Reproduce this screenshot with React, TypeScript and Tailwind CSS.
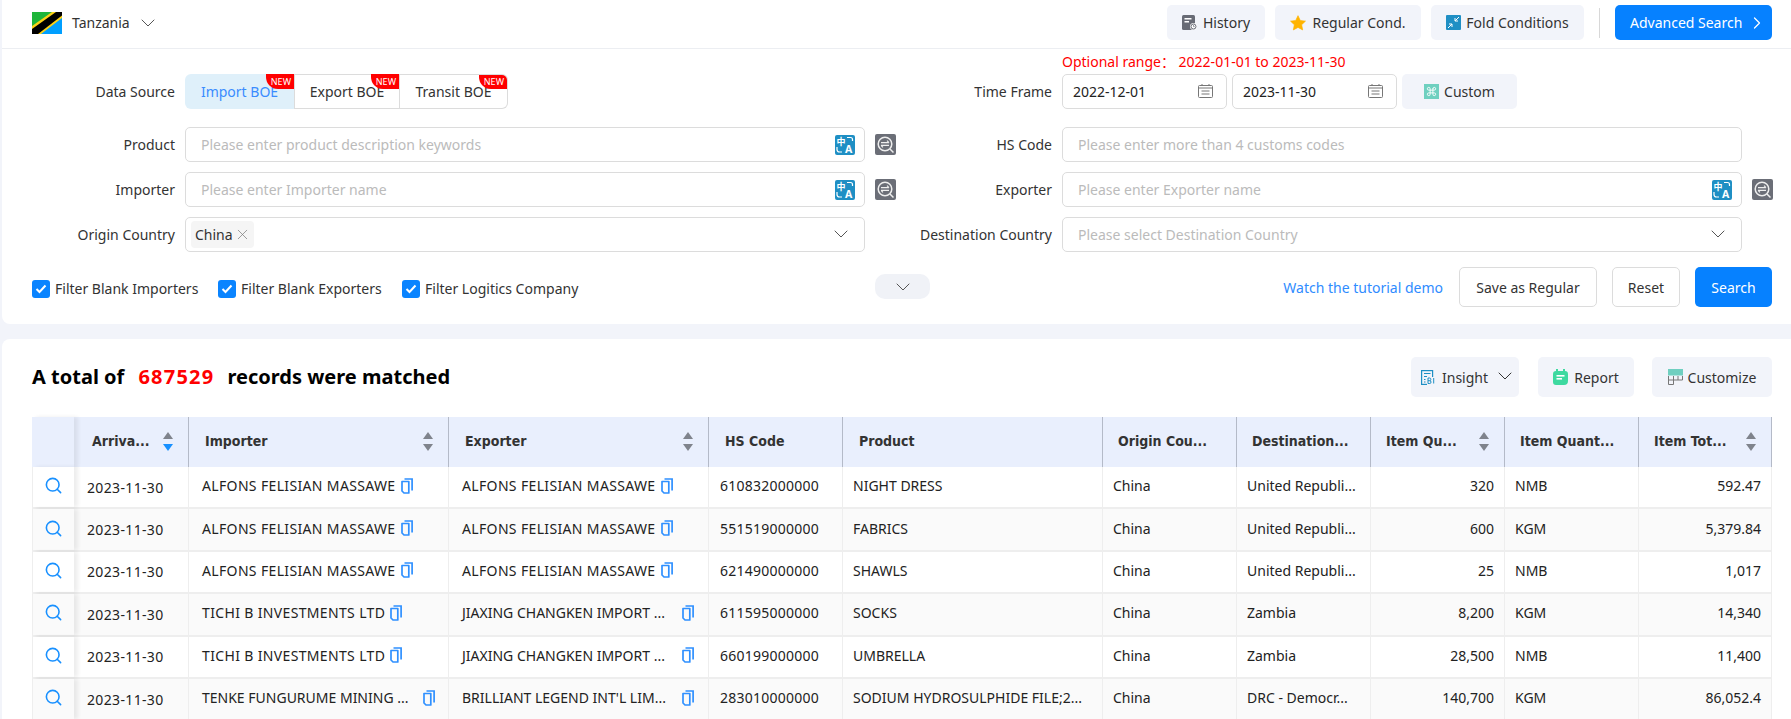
import { ChevronDown, ChevronRight, Command, Search, X } from 'lucide-react';
import type { ReactNode } from 'react';

const rows = [
  { importer: 'ALFONS FELISIAN MASSAWE', exporter: 'ALFONS FELISIAN MASSAWE', hs: '610832000000', product: 'NIGHT DRESS', dest: 'United Republi...', qty: '320', unit: 'NMB', total: '592.47' },
  { importer: 'ALFONS FELISIAN MASSAWE', exporter: 'ALFONS FELISIAN MASSAWE', hs: '551519000000', product: 'FABRICS', dest: 'United Republi...', qty: '600', unit: 'KGM', total: '5,379.84' },
  { importer: 'ALFONS FELISIAN MASSAWE', exporter: 'ALFONS FELISIAN MASSAWE', hs: '621490000000', product: 'SHAWLS', dest: 'United Republi...', qty: '25', unit: 'NMB', total: '1,017' },
  { importer: 'TICHI B INVESTMENTS LTD', exporter: 'JIAXING CHANGKEN IMPORT ...', long: true, hs: '611595000000', product: 'SOCKS', dest: 'Zambia', qty: '8,200', unit: 'KGM', total: '14,340' },
  { importer: 'TICHI B INVESTMENTS LTD', exporter: 'JIAXING CHANGKEN IMPORT ...', long: true, hs: '660199000000', product: 'UMBRELLA', dest: 'Zambia', qty: '28,500', unit: 'NMB', total: '11,400' },
  { importer: 'TENKE FUNGURUME MINING ...', importerLong: true, exporter: "BRILLIANT LEGEND INT'L LIM...", long: true, hs: '283010000000', product: 'SODIUM HYDROSULPHIDE FILE;2...', dest: 'DRC - Democr...', qty: '140,700', unit: 'KGM', total: '86,052.4' },
];

const Flag = () => (
  <svg width="30" height="22" viewBox="0 0 30 22" className="shrink-0 -mt-[2px]">
    <rect width="30" height="22" fill="#1eb53a" />
    <polygon points="30,0 30,22 0,22" fill="#009fff" />
    <polygon points="0,22 0,14 20,0 30,0 30,6 9,22" fill="#fcd116" />
    <polygon points="0,22 0,17 24,0 30,0 30,3.5 6,22" fill="#000" />
  </svg>
);

const HistoryIcon = () => (
  <svg width="15" height="15" viewBox="0 0 15 15" className="shrink-0">
    <rect width="13" height="15" rx="1.5" fill="#686b75" />
    <rect x="2.5" y="3" width="7" height="1.5" fill="#fff" />
    <rect x="2.5" y="6" width="4.5" height="1.5" fill="#fff" />
    <circle cx="11.5" cy="11.5" r="3.5" fill="#fff" />
    <circle cx="11.5" cy="11.5" r="2.5" fill="none" stroke="#686b75" />
    <path d="M11.5 10v1.6h1.2" stroke="#686b75" strokeWidth="0.7" fill="none" />
  </svg>
);

const StarIcon = () => (
  <svg width="16" height="16" viewBox="0 0 24 24" className="shrink-0">
    <path d="M12 1l3.4 7.2 7.8 1-5.7 5.4 1.5 7.8L12 18.6l-7 3.8 1.5-7.8L.8 9.2l7.8-1z" fill="#ffb400" stroke="#ffb400" strokeLinejoin="round" />
  </svg>
);

const FoldIcon = () => (
  <svg width="15" height="15" viewBox="0 0 15 15" className="shrink-0">
    <rect width="15" height="15" rx="1" fill="#1f8fc4" />
    <path d="M13 2 9 6M9 3v3h3M2 13l4-4M3 9h3v3" stroke="#fff" strokeWidth="1" fill="none" />
  </svg>
);

const CalendarIcon = () => (
  <svg width="15" height="14" viewBox="0 0 15 14" fill="none" stroke="#777" strokeWidth="1" className="shrink-0 -mt-[2px]">
    <rect x="0.5" y="1.5" width="14" height="12" rx="1" />
    <path d="M0.5 4h14M4 0v2M11 0v2M3.5 7h8M3.5 10h8" />
  </svg>
);

const TranslateIcon = () => (
  <svg width="20" height="20" viewBox="0 0 20 20" className="shrink-0">
    <rect width="20" height="20" rx="2" fill="#1f8fc4" />
    <text x="1.5" y="9.5" fontSize="9" fontWeight="700" fill="#fff" fontFamily="'Noto Sans CJK SC', sans-serif">中</text>
    <text x="10" y="18" fontSize="10.5" fontWeight="700" fill="#fff" fontFamily="'Noto Sans', sans-serif">A</text>
    <path d="M12 2.5h3.5q2 0 2 2v1.5M2 12v2.5q0 2.5 2.5 2.5H7" stroke="#fff" strokeWidth="1.2" fill="none" />
  </svg>
);

const CompareIcon = () => (
  <svg width="21" height="21" viewBox="0 0 21 21" className="shrink-0">
    <rect width="21" height="21" rx="2" fill="#6b6e77" />
    <circle cx="10" cy="10" r="6.8" fill="none" stroke="#eee" strokeWidth="1.5" />
    <path d="M15 15l3.5 3.5" stroke="#eee" strokeWidth="1.5" />
    <path d="M6 8.6h8M14 8.6l-2-2M14 11.4H6M6 11.4l2 2" stroke="#eee" strokeWidth="1.1" fill="none" />
  </svg>
);

const InsightIcon = () => (
  <svg width="15" height="15" viewBox="0 0 15 15" fill="none" className="shrink-0">
    <rect x="0.6" y="0.6" width="11" height="13.8" stroke="#1f8fc4" strokeWidth="1.2" />
    <path d="M3 3.5h6.5M3 6.5h3M3 9.5h1.5M3 12h1.5" stroke="#1f8fc4" strokeWidth="1.1" />
    <rect x="6" y="7" width="9" height="8" fill="#f2f4fa" />
    <path d="M7 8v5.5h1.8q1.2 0 1.2-1.4t-1.2-1.4H7M8.8 10.7q1 0 1-1.3T8.8 8H7M12.7 8v5.5" stroke="#1f8fc4" strokeWidth="1" />
  </svg>
);

const ReportIcon = () => (
  <svg width="15" height="16" viewBox="0 0 15 16" className="shrink-0">
    <path d="M3 0h2v2h5V0h2v2q3 0 3 3v7q0 4-4 4H3q-3 0-3-3V5q0-3 3-3z" fill="#3ed9a0" />
    <rect x="3.5" y="6" width="8" height="1.6" fill="#fff" />
    <rect x="3.5" y="9" width="5.5" height="1.6" fill="#fff" />
  </svg>
);

const CustomizeIcon = () => (
  <svg width="15" height="16" viewBox="0 0 15 16" fill="none" className="shrink-0">
    <rect width="15" height="6.5" fill="#6fcfc0" />
    <path d="M.5 7v8.5h5V7M.5 11h14M5.5 7v4M10 7v4M14.5 7v4" stroke="#777" strokeWidth="1" />
  </svg>
);

const CopyIcon = () => (
  <svg width="12" height="16" viewBox="0 0 12 16" fill="none" stroke="#2f90ff" strokeWidth="1.7" className="shrink-0">
    <path d="M3.5 1h7.6v11.5" />
    <path d="M1 3.5h6.8V15H3l-2-2z" strokeLinejoin="round" />
  </svg>
);

const SortIcon = ({ active }: { active?: boolean }) => (
  <svg width="10" height="19" viewBox="0 0 10 19" className="shrink-0">
    <polygon points="5,0 10,7 0,7" fill="#7f838c" />
    <polygon points="5,19 10,12 0,12" fill={active ? '#1890ff' : '#7f838c'} />
  </svg>
);

const Checkbox = ({ label, className }: { label: string; className: string }) => (
  <div className={`flex items-center gap-[5px] ${className}`}>
    <span className="w-[18px] h-[18px] rounded-[3px] bg-[#0a84ff] flex items-center justify-center">
      <svg width="12" height="10" viewBox="0 0 12 10" fill="none" stroke="#fff" strokeWidth="2">
        <path d="M1.5 5l3 3 6-6.5" />
      </svg>
    </span>
    <span>{label}</span>
  </div>
);

const Segment = ({ label, className }: { label: string; className: string }) => (
  <div className={`relative h-full flex items-center justify-center border-y border-r border-[#dcdcdc] ${className}`}>
    {label}
    <span className="absolute -top-px right-0 w-[28px] h-[15px] bg-[#ff0000] rounded-bl-[12px] text-white text-[9px] leading-[15px] text-right pr-[3px]">
      NEW
    </span>
  </div>
);

const Label = ({ children, className }: { children: ReactNode; className: string }) => (
  <div className={`shrink-0 text-right mr-[10px] ${className}`}>{children}</div>
);

const TextField = ({ placeholder, translate }: { placeholder: string; translate?: boolean }) => (
  <div className="w-[680px] h-[35px] shrink-0 border border-[#dcdcdc] rounded-[5px] flex items-center justify-between pl-[15px] pr-[9px] text-[#bbb]">
    <span>{placeholder}</span>
    {translate && <TranslateIcon />}
  </div>
);

const SoftButton = ({ children, className }: { children: ReactNode; className: string }) => (
  <div className={`flex items-center justify-center rounded-[5px] bg-[#f2f4fa] ${className}`}>{children}</div>
);

const HeadCell = ({ title, sort, active, pad }: { title: string; sort?: boolean; active?: boolean; pad: string }) => (
  <div className={`flex items-center justify-between pr-[15px] pb-[2px] border-r border-[#b4bac8] font-bold text-[#333] font-['DejaVu_Sans_Condensed','DejaVu_Sans',sans-serif] text-[14px] ${pad}`}>
    <span>{title}</span>
    {sort && <SortIcon active={active} />}
  </div>
);

const cell = 'flex items-center border-r border-[#eee] whitespace-nowrap overflow-hidden pb-[3px]';

const App = () => {
  return (
    <div className="h-[719px] overflow-hidden bg-[#f2f4fa] pl-[2px] text-[14px] text-[#333] font-['Noto_Sans','Noto_Sans_CJK_SC',sans-serif]">
      <section className="bg-white h-[324px] rounded-bl-[8px]">
        <header className="h-[49px] border-b border-[#eceef2] flex items-center pl-[30px] pr-[19px]">
          <Flag />
          <span className="ml-[10px] -mt-[3px]">Tanzania</span>
          <ChevronDown size={24} strokeWidth={1} className="ml-[6px] -mt-[3px] text-[#555]" />
          <SoftButton className="ml-auto w-[98px] h-[35px] gap-[6px] -mt-[3px]">
            <HistoryIcon />
            History
          </SoftButton>
          <SoftButton className="ml-[10px] w-[146px] h-[35px] gap-[6px] -mt-[3px]">
            <StarIcon />
            Regular Cond.
          </SoftButton>
          <SoftButton className="ml-[10px] w-[153px] h-[35px] gap-[5px] -mt-[3px]">
            <FoldIcon />
            Fold Conditions
          </SoftButton>
          <div className="ml-[15px] w-px h-[30px] bg-[#d8d8d8] -mt-[3px]" />
          <div className="ml-[15px] w-[157px] h-[35px] -mt-[3px] rounded-[5px] bg-[#0681ff] text-white flex items-center pl-[15px] gap-[5px]">
            Advanced Search
            <ChevronRight size={20} strokeWidth={1.5} />
          </div>
        </header>

        <div className="h-[25px] pl-[1060px] text-[#ff0000] leading-[26px]">Optional range：&nbsp;2022-01-01 to 2023-11-30</div>

        <div className="flex h-[35px] items-center pl-[30px]">
          <Label className="w-[143px]">Data Source</Label>
          <div className="flex w-[680px] h-full">
            <div className="relative w-[109px] h-full flex items-center justify-center rounded-l-[6px] bg-[#dff0fa] text-[#3a8cff]">
              Import BOE
              <span className="absolute top-0 right-0 w-[28px] h-[15px] bg-[#ff0000] rounded-bl-[12px] text-white text-[9px] leading-[15px] text-right pr-[3px]">
                NEW
              </span>
            </div>
            <Segment label="Export BOE" className="w-[106px] border-l" />
            <Segment label="Transit BOE" className="w-[108px] rounded-r-[6px] overflow-hidden" />
          </div>
          <div className="w-[31px] shrink-0" />
          <Label className="w-[156px]">Time Frame</Label>
          <div className="w-[165px] h-full border border-[#dcdcdc] rounded-[5px] flex items-center justify-between pl-[10px] pr-[13px] text-[#222]">
            2022-12-01
            <CalendarIcon />
          </div>
          <div className="ml-[5px] w-[165px] h-full border border-[#dcdcdc] rounded-[5px] flex items-center justify-between pl-[10px] pr-[13px] text-[#222]">
            2023-11-30
            <CalendarIcon />
          </div>
          <SoftButton className="ml-[5px] w-[115px] h-full gap-[5px]">
            <span className="w-[15px] h-[15px] bg-[#6fd0c0] flex items-center justify-center">
              <Command size={11} color="#fff" strokeWidth={2} />
            </span>
            Custom
          </SoftButton>
        </div>

        <div className="flex items-center pl-[30px] mt-[18px]">
          <Label className="w-[143px]">Product</Label>
          <TextField placeholder="Please enter product description keywords" translate />
          <div className="w-[31px] shrink-0 pl-[10px]"><CompareIcon /></div>
          <Label className="w-[156px]">HS Code</Label>
          <TextField placeholder="Please enter more than 4 customs codes" />
        </div>

        <div className="flex items-center pl-[30px] mt-[10px]">
          <Label className="w-[143px]">Importer</Label>
          <TextField placeholder="Please enter Importer name" translate />
          <div className="w-[31px] shrink-0 pl-[10px]"><CompareIcon /></div>
          <Label className="w-[156px]">Exporter</Label>
          <TextField placeholder="Please enter Exporter name" translate />
          <div className="pl-[10px]"><CompareIcon /></div>
        </div>

        <div className="flex items-center pl-[30px] mt-[10px]">
          <Label className="w-[143px]">Origin Country</Label>
          <div className="w-[680px] h-[35px] shrink-0 border border-[#dcdcdc] rounded-[5px] flex items-center justify-between pl-[5px] pr-[11px]">
            <span className="h-[27px] w-[63px] rounded-[4px] bg-[#f5f5f5] flex items-center pl-[4px] gap-[1px]">
              China
              <X size={17} strokeWidth={1} className="text-[#777]" />
            </span>
            <ChevronDown size={24} strokeWidth={1} className="text-[#555] -mt-[2px]" />
          </div>
          <div className="w-[31px] shrink-0" />
          <Label className="w-[156px]">Destination Country</Label>
          <div className="w-[680px] h-[35px] shrink-0 border border-[#dcdcdc] rounded-[5px] flex items-center justify-between pl-[15px] pr-[11px] text-[#bbb]">
            Please select Destination Country
            <ChevronDown size={24} strokeWidth={1} className="text-[#555] -mt-[2px]" />
          </div>
        </div>

        <div className="flex items-center pl-[30px] pr-[19px] mt-[15px] h-[40px]">
          <div className="relative w-[843px] h-full flex items-center pt-[3px]">
            <Checkbox label="Filter Blank Importers" className="w-[186px]" />
            <Checkbox label="Filter Blank Exporters" className="w-[184px]" />
            <Checkbox label="Filter Logitics Company" className="w-[200px]" />
          </div>
          <div className="w-[55px] h-[25px] -mt-[1px] rounded-[10px] bg-[#f0f2f7] flex items-center justify-center">
            <ChevronDown size={24} strokeWidth={1} className="text-[#555]" />
          </div>
          <span className="ml-auto text-[#2f8cff]">Watch the tutorial demo</span>
          <div className="ml-[16px] w-[138px] h-full rounded-[5px] border border-[#dcdcdc] flex items-center justify-center">Save as Regular</div>
          <div className="ml-[15px] w-[68px] h-full rounded-[5px] border border-[#dcdcdc] flex items-center justify-center">Reset</div>
          <div className="ml-[15px] w-[77px] h-full rounded-[5px] bg-[#0681ff] text-white flex items-center justify-center">Search</div>
        </div>
      </section>

      <section className="mt-[15px] bg-white rounded-tl-[8px] pl-[30px] pr-[19px] pt-[18px]">
        <div className="flex items-center h-[40px]">
          <h2 className="font-bold text-[20px] text-black whitespace-pre">
            A total of <span className="text-[#ff0000] ml-[9px] mr-[8px] tracking-[1.2px]">687529</span> records were matched
          </h2>
          <SoftButton className="ml-auto w-[108px] h-full gap-[6px] !justify-start pl-[10px]">
            <InsightIcon />
            Insight
            <ChevronDown size={24} strokeWidth={1} className="-ml-[1px] -mt-[2px]" />
          </SoftButton>
          <SoftButton className="ml-[19px] w-[96px] h-full gap-[6px]">
            <ReportIcon />
            Report
          </SoftButton>
          <SoftButton className="ml-[18px] w-[120px] h-full gap-[5px]">
            <CustomizeIcon />
            Customize
          </SoftButton>
        </div>

        <div className="mt-[20px] w-[1740px]">
          <div className="grid grid-cols-[42px_115px_260px_260px_134px_260px_134px_134px_134px_134px_133px] h-[50px] bg-[#e9effd]">
            <div className="relative z-10 shadow-[4px_0_4px_rgba(0,0,0,0.07)]" />
            <HeadCell title="Arriva..." sort active pad="pl-[18px]" />
            <HeadCell title="Importer" sort pad="pl-[16px]" />
            <HeadCell title="Exporter" sort pad="pl-[16px]" />
            <HeadCell title="HS Code" pad="pl-[16px]" />
            <HeadCell title="Product" pad="pl-[16px]" />
            <HeadCell title="Origin Cou..." pad="pl-[15px]" />
            <HeadCell title="Destination..." pad="pl-[15px]" />
            <HeadCell title="Item Qu..." sort pad="pl-[15px]" />
            <HeadCell title="Item Quant..." pad="pl-[15px]" />
            <HeadCell title="Item Tot..." sort pad="pl-[15px]" />
          </div>
          {rows.map((row, index) => (
            <div
              key={index}
              className={`grid grid-cols-[42px_115px_260px_260px_134px_260px_134px_134px_134px_134px_133px] h-[42.4px] border-b-2 border-[#eee] text-[#222] ${index % 2 === 1 ? 'bg-[#fafafa]' : 'bg-white'}`}
            >
              <div className="relative z-10 flex items-center justify-center border-l border-[#eee] bg-inherit shadow-[4px_0_4px_rgba(0,0,0,0.07)] pb-[3px]">
                <Search size={19} strokeWidth={2} color="#1890ff" />
              </div>
              <div className={`${cell} pl-[13px] !pb-0 tracking-[0.35px]`}>2023-11-30</div>
              <div className={`${cell} pl-[13px]`}>
                <span className={row.importerLong ? 'w-[210px] mr-[11px]' : 'tracking-[0.35px] mr-[5px]'}>{row.importer}</span>
                <CopyIcon />
              </div>
              <div className={`${cell} pl-[13px]`}>
                <span className={row.long ? 'w-[210px] mr-[10px]' : 'tracking-[0.35px] mr-[5px]'}>{row.exporter}</span>
                <CopyIcon />
              </div>
              <div className={`${cell} pl-[11px] tracking-[0.25px]`}>{row.hs}</div>
              <div className={`${cell} pl-[10px]`}>{row.product}</div>
              <div className={`${cell} pl-[10px]`}>China</div>
              <div className={`${cell} pl-[10px]`}>{row.dest}</div>
              <div className={`${cell} justify-end pr-[10px]`}>{row.qty}</div>
              <div className={`${cell} pl-[10px]`}>{row.unit}</div>
              <div className={`${cell} justify-end pr-[10px]`}>{row.total}</div>
            </div>
          ))}
        </div>
      </section>
    </div>
  );
};

export default App;
